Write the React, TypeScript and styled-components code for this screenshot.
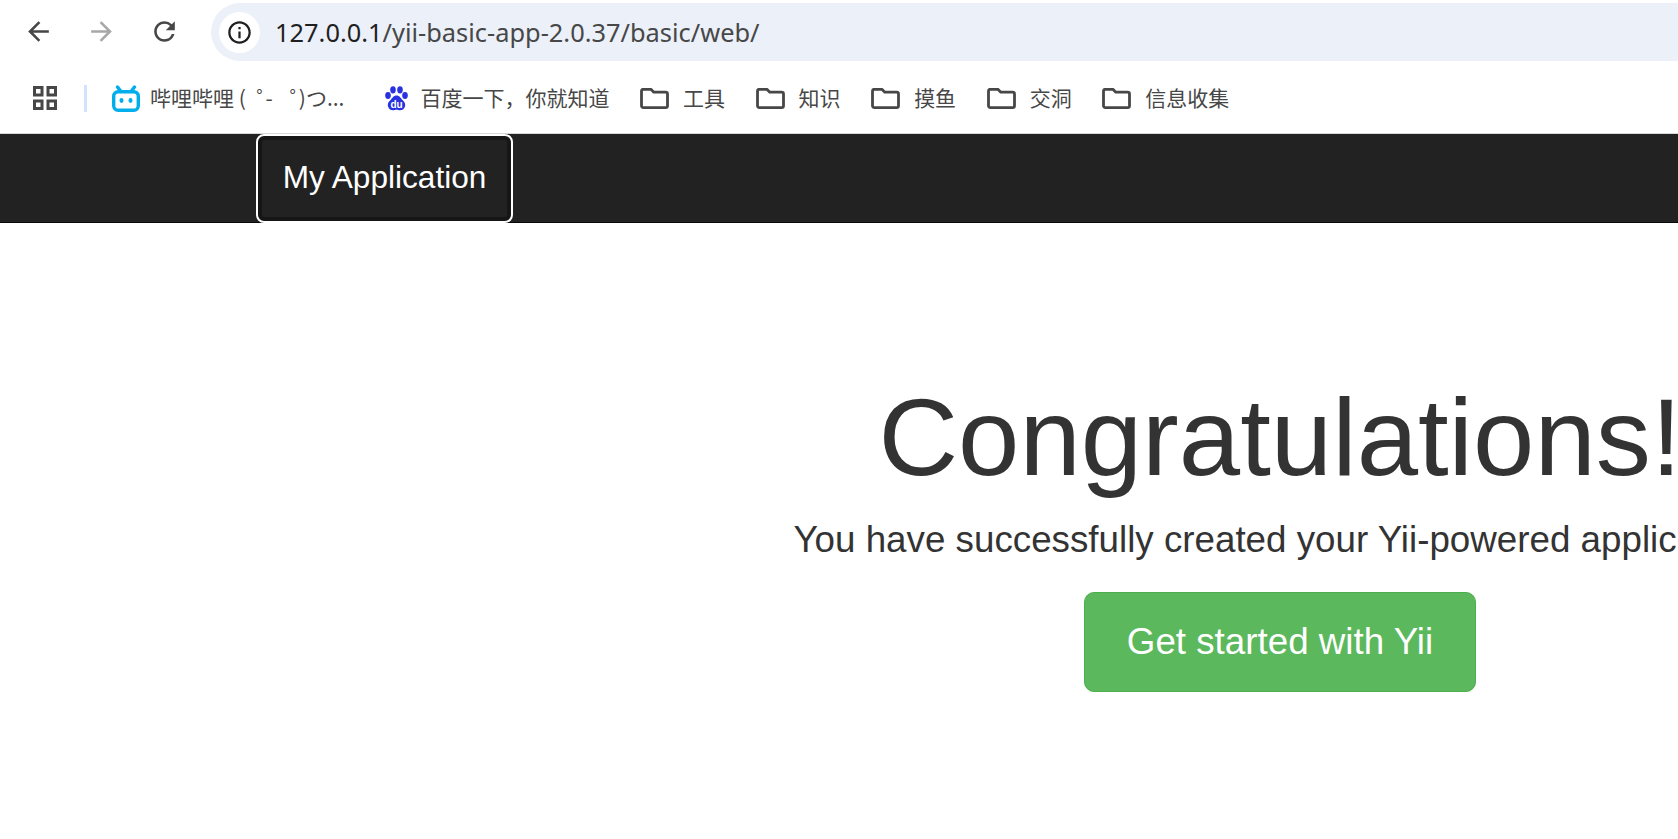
import styled, { createGlobalStyle } from "styled-components";

const GlobalStyle = createGlobalStyle`
  html, body {
    margin: 0;
    padding: 0;
    background: #fff;
    overflow: hidden;
  }
  #root {
    width: 1678px;
    height: 839px;
    overflow: hidden;
  }
`;

const Toolbar = styled.div`
  display: flex;
  align-items: center;
  height: 66px;
  padding: 0 0 3px 23px;
  box-sizing: border-box;
  gap: 32px;
`;

const NavIcon = styled.svg<{ $off?: boolean }>`
  width: 31px;
  height: 31px;
  flex: none;
  fill: ${(p) => (p.$off ? "#a8a8a8" : "#474747")};
`;

const AddressBar = styled.div`
  flex: 1;
  display: flex;
  align-items: center;
  height: 58px;
  margin: 1px -40px 0 -1px;
  padding-left: 8px;
  gap: 15px;
  border-radius: 29px;
  background: #ecf0f9;
`;

const SiteBadge = styled.div`
  display: flex;
  align-items: center;
  justify-content: center;
  width: 41px;
  height: 41px;
  border-radius: 50%;
  background: #fff;
`;

const Url = styled.div`
  font-family: "Noto Sans", "Open Sans", sans-serif;
  font-size: 25.4px;
  color: #474747;
  white-space: nowrap;
  b {
    font-weight: 400;
    color: #1f1f1f;
  }
`;

const BookmarkBar = styled.div`
  display: flex;
  align-items: center;
  height: 67px;
  padding: 0 0 3px 33px;
  box-sizing: border-box;
  font-family: "Noto Sans CJK SC", "Noto Sans", sans-serif;
  font-size: 21px;
  color: #474747;
`;

const Divider = styled.div`
  width: 3px;
  height: 27px;
  margin: 0 25px 0 27px;
  background: #d3e3fd;
`;

const Bookmark = styled.div<{ $gap?: number; $after?: number }>`
  display: flex;
  align-items: center;
  gap: ${(p) => p.$gap ?? 14}px;
  margin-right: ${(p) => p.$after ?? 30.6}px;
  white-space: nowrap;
  line-height: 1;
`;

const Label = styled.span`
  margin-top: -2px;
`;

const Kana = styled.span<{ $left: number }>`
  letter-spacing: -12px;
  margin-left: ${(p) => p.$left}px;
`;

const Navbar = styled.div`
  height: 90px;
  box-sizing: border-box;
  border-top: 1px solid #d8d8d8;
  border-bottom: 1px solid #080808;
  background: #222;
`;

const Container = styled.div`
  width: 2048px;
  margin-left: 256px;
  font-family: "Liberation Sans", Arial, sans-serif;
`;

const Brand = styled.a`
  display: flex;
  align-items: center;
  justify-content: center;
  width: 257px;
  height: 89px;
  padding-bottom: 2px;
  box-sizing: border-box;
  border: 2.5px solid #fff;
  border-radius: 8px;
  box-shadow: inset 0 0 0 4px #161616;
  font-size: 31.6px;
  color: #fff;
`;

const Jumbotron = styled.div`
  padding-top: 153px;
  text-align: center;
  color: #333;
`;

const Title = styled.h1`
  margin: 0 0 17px;
  font-size: 110.3px;
  font-weight: 400;
  line-height: 1.1;
`;

const Lead = styled.p`
  margin: 0 0 26px;
  font-size: 36.75px;
  line-height: 1.4;
`;

const StartButton = styled.a`
  display: inline-block;
  padding: 25px 42px;
  border: 1px solid #4cae4c;
  border-radius: 10px;
  background: #5cb85c;
  color: #fff;
  font-size: 36.75px;
  line-height: 48px;
`;

const FolderIcon = () => (
  <svg width="29" height="21" viewBox="0 0 29 21" fill="none">
    <path
      d="M1.5 3.2c0-1.1.7-1.9 1.9-1.9h7.5l2.9 2.9h11.8c1.2 0 1.9.8 1.9 1.9v11.6c0 1.1-.7 1.9-1.9 1.9H3.4c-1.2 0-1.9-.8-1.9-1.9V3.2z"
      stroke="#474747"
      strokeWidth="2.8"
      strokeLinejoin="round"
    />
  </svg>
);

const AppsIcon = () => (
  <svg width="24" height="24" viewBox="0 0 24 24" fill="none" stroke="#474747" strokeWidth="3">
    <rect x="1.5" y="1.5" width="7.5" height="7.5" />
    <rect x="15" y="1.5" width="7.5" height="7.5" />
    <rect x="1.5" y="15" width="7.5" height="7.5" />
    <rect x="15" y="15" width="7.5" height="7.5" />
  </svg>
);

const BilibiliIcon = () => (
  <svg width="28" height="27" viewBox="0 0 28 27" fill="none">
    <rect x="1.7" y="6.7" width="24.6" height="18.6" rx="4.5" stroke="#00aeec" strokeWidth="3.4" />
    <path d="M9 6.5 5.5 2M19 6.5 22.5 2" stroke="#00aeec" strokeWidth="3.4" strokeLinecap="round" />
    <ellipse cx="9.5" cy="15.5" rx="2" ry="2.4" fill="#00aeec" />
    <ellipse cx="18.5" cy="15.5" rx="2" ry="2.4" fill="#00aeec" />
  </svg>
);

const BaiduIcon = () => (
  <svg width="23" height="25" viewBox="0 0 23 25">
    <g fill="#2932e1">
      <ellipse cx="3" cy="9.5" rx="2.8" ry="3.4" />
      <ellipse cx="8" cy="3.8" rx="2.8" ry="3.6" />
      <ellipse cx="15" cy="3.8" rx="2.8" ry="3.6" />
      <ellipse cx="20" cy="9.5" rx="2.8" ry="3.4" />
      <path d="M11.5 9.5c3 0 4 2.4 6 4.4 2.3 2.2 3 4 2.6 6-.5 2.8-2.6 4.3-5.1 4.3-1.4 0-2.4-.5-3.5-.5s-2.1.5-3.5.5c-2.5 0-4.6-1.5-5.1-4.3-.4-2 .3-3.8 2.6-6 2-2 3-4.4 6-4.4z" />
    </g>
    <text x="11.5" y="22" textAnchor="middle" fontFamily="Liberation Sans, sans-serif" fontWeight="700" fontSize="10" fill="#fff">
      du
    </text>
  </svg>
);

export default function App() {
  return (
    <>
      <GlobalStyle />
      <Toolbar>
        <NavIcon viewBox="0 0 24 24">
          <path d="M20 11H7.83l5.59-5.59L12 4l-8 8 8 8 1.41-1.41L7.83 13H20v-2z" />
        </NavIcon>
        <NavIcon viewBox="0 0 24 24" $off>
          <path d="M4 11h12.17l-5.59-5.59L12 4l8 8-8 8-1.41-1.41L16.17 13H4v-2z" />
        </NavIcon>
        <NavIcon viewBox="0 0 24 24">
          <path d="M17.65 6.35A7.958 7.958 0 0 0 12 4c-4.42 0-7.99 3.58-7.99 8s3.57 8 7.99 8c3.73 0 6.84-2.55 7.73-6h-2.08A5.99 5.99 0 0 1 12 18c-3.31 0-6-2.69-6-6s2.69-6 6-6c1.66 0 3.14.69 4.22 1.78L13 11h7V4l-2.35 2.35z" />
        </NavIcon>
        <AddressBar>
          <SiteBadge>
            <svg width="27" height="27" viewBox="0 0 24 24" fill="#1f1f1f">
              <path d="M11 7h2v2h-2zm0 4h2v6h-2zm1-9C6.48 2 2 6.48 2 12s4.48 10 10 10 10-4.48 10-10S17.52 2 12 2zm0 18c-4.41 0-8-3.59-8-8s3.59-8 8-8 8 3.59 8 8-3.59 8-8 8z" />
            </svg>
          </SiteBadge>
          <Url>
            <b>127.0.0.1</b>/yii-basic-app-2.0.37/basic/web/
          </Url>
        </AddressBar>
      </Toolbar>
      <BookmarkBar>
        <AppsIcon />
        <Divider />
        <Bookmark $gap={10} $after={41}>
          <BilibiliIcon />
          <Label>
            哔哩哔哩 ( <Kana $left={6}>゜</Kana>-<Kana $left={17}>゜</Kana>)つ...
          </Label>
        </Bookmark>
        <Bookmark $gap={12} $after={30.5}>
          <BaiduIcon />
          <Label>百度一下，你就知道</Label>
        </Bookmark>
        <Bookmark>
          <FolderIcon />
          <Label>工具</Label>
        </Bookmark>
        <Bookmark>
          <FolderIcon />
          <Label>知识</Label>
        </Bookmark>
        <Bookmark>
          <FolderIcon />
          <Label>摸鱼</Label>
        </Bookmark>
        <Bookmark>
          <FolderIcon />
          <Label>交洞</Label>
        </Bookmark>
        <Bookmark>
          <FolderIcon />
          <Label>信息收集</Label>
        </Bookmark>
      </BookmarkBar>
      <Navbar>
        <Container>
          <Brand>My Application</Brand>
        </Container>
      </Navbar>
      <Container>
        <Jumbotron>
          <Title>Congratulations!</Title>
          <Lead>You have successfully created your Yii-powered application.</Lead>
          <StartButton>Get started with Yii</StartButton>
        </Jumbotron>
      </Container>
    </>
  );
}
